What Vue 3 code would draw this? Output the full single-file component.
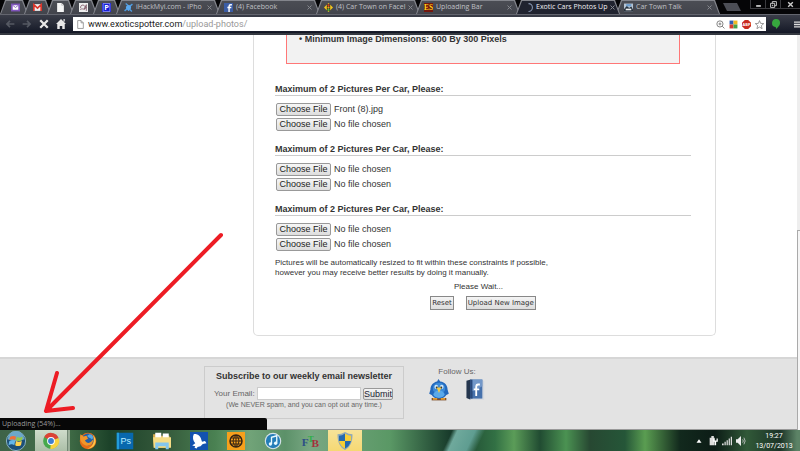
<template>
  <div class="desktop">
    <header class="browser">
      <nav class="tabs">
        <a v-for="tab in pinned" :key="tab" href="#" class="tab pinned" :aria-label="tab">
          <svg class="favicon" viewBox="0 0 16 16" v-html="icons[tab]"></svg>
        </a>
        <a v-for="tab in tabs" :key="tab.title" href="#" class="tab" :class="{ active: tab.active }">
          <svg class="favicon" viewBox="0 0 16 16" v-html="icons[tab.icon]"></svg>
          <span class="tab-title">{{ tab.title }}</span>
          <svg class="tab-close" viewBox="0 0 5 5"><path d="M.5.5l4 4M4.500.5l-4 4" stroke="#85878d" /></svg>
        </a>
        <button class="new-tab" aria-label="New tab"></button>
        <div class="window-controls">
          <button aria-label="Minimise"><svg viewBox="0 0 12 12"><path d="M2 7h8v3H2z" fill="#ccc" /></svg></button>
          <button aria-label="Restore"><svg viewBox="0 0 12 12"><path d="M4 4V1h7v7H8M1 4h7v7H1zM4 7h1v1H4z" fill="none" stroke="#ccc" stroke-width="1.6" /></svg></button>
          <button aria-label="Close"><svg viewBox="0 0 12 12"><path d="M2 2l8 8M10 2l-8 8" stroke="#ccc" stroke-width="2.4" /></svg></button>
        </div>
      </nav>

      <div class="toolbar">
        <button class="nav-button" aria-label="Back"><svg viewBox="0 0 16 16"><path d="M15 8H3M8 3L3 8l5 5" fill="none" stroke="#555963" stroke-width="2.6" /></svg></button>
        <button class="nav-button" aria-label="Forward"><svg viewBox="0 0 16 16"><path d="M1 8h12M8 3l5 5-5 5" fill="none" stroke="#555963" stroke-width="2.6" /></svg></button>
        <button class="nav-button" aria-label="Stop"><svg viewBox="0 0 16 16"><path d="M2 2l12 12M14 2L2 14" stroke="#e8e8e8" stroke-width="3.6" /></svg></button>
        <button class="nav-button" aria-label="Home"><svg viewBox="0 0 16 16"><path d="M8 0l8 8h-2v8h-4v-5H6v5H2V8H0zM12 0h2v4h-2z" fill="#e8e8e8" /></svg></button>
        <div class="address">
          <svg class="page-icon" viewBox="0 0 12 16"><path d="M1 1h6l4 4v10H1zM7 1v4h4" fill="#fff" stroke="#888" stroke-width="1.4" /></svg>
          <span class="url">www.exoticspotter.com<span class="path">/upload-photos/</span></span>
          <svg viewBox="0 0 16 16"><circle cx="7" cy="7" r="5.5" fill="none" stroke="#777" stroke-width="1.6" /><path d="M11 11l4 4M4.500 7h5M7 4.500v5" stroke="#777" stroke-width="1.6" /></svg>
          <svg viewBox="0 0 16 16"><path d="M1 1h7v7H1z" fill="#315eb4" /><path d="M8 1h7v7H8z" fill="#f2b822" /><path d="M1 8h7v7H1z" fill="#d43c30" /><path d="M8 8h7v7H8z" fill="#47a047" /></svg>
          <svg viewBox="0 0 16 16"><path d="M5 0h6l5 5v6l-5 5H5l-5-5V5z" fill="#c92a20" /><text x="8" y="10.500" font-size="7" font-weight="700" text-anchor="middle" fill="#fff">ABP</text></svg>
          <svg viewBox="0 0 16 16"><path d="M8 1l2 5 5.500.4-4.200 3.600 1.300 5.400L8 12.500l-4.600 2.900 1.300-5.400L.5 6.400 6 6z" fill="#fff" stroke="#777" stroke-width="1.3" /></svg>
        </div>
        <button class="extension" aria-label="Hangouts"><svg viewBox="0 0 16 16"><path d="M8 0a6.500 6.500 0 016.500 6.500C14.500 11 10 14 8 16c0-2 0-3-1-3.100A6.500 6.500 0 018 0z" fill="#37a83e" /></svg></button>
        <button class="menu" aria-label="Menu"><svg viewBox="0 0 10 12"><path d="M0 2h10M0 6h10M0 10h10" stroke="#ddd" stroke-width="2.200" /></svg></button>
      </div>
    </header>

    <main class="page">
      <div class="site">
        <form class="panel" @submit.prevent>
          <ul class="rules">
            <li>Minimum Image Dimensions: 600 By 300 Pixels</li>
          </ul>

          <fieldset v-for="car in 3" :key="car" class="car">
            <legend>Maximum of 2 Pictures Per Car, Please:</legend>
            <input
              v-for="slot in 2"
              :key="slot"
              ref="fileInputs"
              type="file"
              class="file"
              :aria-label="`Car ${car} picture ${slot}`"
            />
          </fieldset>

          <p class="note">
            Pictures will be automatically resized to fit within these constraints if possible,<br />
            however you may receive better results by doing it manually.
          </p>
          <p class="wait">Please Wait...</p>
          <div class="actions">
            <button type="button">Reset</button>
            <button type="submit">Upload New Image</button>
          </div>
        </form>
      </div>

      <footer class="footer">
        <form class="newsletter" @submit.prevent>
          <h2>Subscribe to our weekly email newsletter</h2>
          <div class="signup">
            <label for="email">Your Email:</label>
            <input id="email" v-model="email" type="email" />
            <button type="submit">Submit</button>
          </div>
          <p>(We NEVER spam, and you can opt out any time.)</p>
        </form>
        <div class="follow">
          <span>Follow Us:</span>
          <div class="social">
            <a href="#" aria-label="Twitter">
              <svg viewBox="0 0 32 36">
                <path d="M4 31h24v4H4z" fill="#7c4d2b" />
                <path d="M15 0l3 4c8 1 12 7 12 13l2 7-4 2c-2 4-7 6-12 6s-10-2-12-6l-4-2 2-7C2 10 7 5 13 4z" fill="#2369bd" />
                <path d="M16 6c7 0 10 5 10 10s-4 7-10 7-10-2-10-7 3-10 10-10z" fill="#3d8bd8" />
                <ellipse cx="16" cy="25" rx="9" ry="6" fill="#5aa9ea" />
                <ellipse cx="11.500" cy="13" rx="3" ry="3.500" fill="#cfe6f7" /><ellipse cx="20.500" cy="13" rx="3" ry="3.500" fill="#cfe6f7" />
                <circle cx="12.500" cy="14" r="1.800" fill="#123" /><circle cx="19.500" cy="14" r="1.800" fill="#123" />
                <path d="M12 14h8l-4 9z" fill="#f3c945" /><path d="M6 31h7v3H6zM19 31h7v3h-7z" fill="#e69b2e" />
              </svg>
            </a>
            <a href="#" aria-label="Facebook">
              <svg viewBox="0 0 32 36">
                <path d="M2 3l7-2v33l-7-3z" fill="#25364e" />
                <path d="M8 1h20l3 3v30H8z" fill="#d5d9df" /><path d="M8 1h20v31H8z" fill="#4671ac" />
                <path d="M8 1h4v31H8z" fill="#29497a" /><path d="M12 1h16v11L12 20z" fill="#7398c9" />
                <path d="M24 9h-3q-3 0-3 4v15M14 17h9" fill="none" stroke="#fff" stroke-width="3" />
              </svg>
            </a>
          </div>
        </div>
      </footer>
      <div class="scrollbar"><div class="thumb"></div></div>
      <div class="status">Uploading (54%)...</div>
    </main>

    <div class="taskbar">
      <button class="start" aria-label="Start"><svg viewBox="0 0 24 24" v-html="icons.windows"></svg></button>
      <button v-for="app in apps" :key="app" class="task" :class="app" :aria-label="app">
        <svg viewBox="0 0 24 24" v-html="icons[app]"></svg>
      </button>
      <div class="tray">
        <svg viewBox="0 0 12 12"><path d="M3 8l3-4 3 4z" fill="#fff" /></svg>
        <svg viewBox="0 0 12 12"><path d="M2 2h6v9H2zM4 0h3v2H4z" fill="#ddd" /><path d="M7 3v3h4V3M9 6v5" fill="none" stroke="#fff" stroke-width="1.500" /></svg>
        <svg viewBox="0 0 12 12"><path d="M0 9h2v2H0zM3 7h1.500v4H3zM5.500 5H7v6H5.500zM8 3h1.500v8H8zM10.500 1H12v10h-1.500z" fill="#ddd" /></svg>
        <svg viewBox="0 0 12 12"><path d="M0 4h2l4-4v12L2 8H0z" fill="#eee" /><path d="M8 4q1.500 2 0 4M9.500 2q3 4 0 8" fill="none" stroke="#ccc" /></svg>
      </div>
      <time class="clock">19:27<br />13/07/2013</time>
    </div>

    <svg class="arrow" viewBox="0 0 190 190" aria-hidden="true">
      <path d="M186 6L11 182M22 144L11 182L38 179" />
    </svg>
  </div>
</template>

<script setup>
import { ref, onMounted } from 'vue'

const email = ref('')
const fileInputs = ref([])

const pinned = ['mail', 'gmail', 'document', 'sketch', 'pandora']
const tabs = [
  { title: 'iHackMyi.com - iPho', icon: 'hack' },
  { title: '(4) Facebook', icon: 'facebook' },
  { title: '(4) Car Town on Facel', icon: 'cartown' },
  { title: 'Uploading Bar', icon: 'spotter' },
  { title: 'Exotic Cars Photos Up', icon: 'loading', active: true },
  { title: 'Car Town Talk', icon: 'talk' },
]
const apps = ['chrome', 'firefox', 'photoshop', 'explorer', 'bird', 'globe', 'itunes', 'ftb', 'shield']

const icons = {
  mail: '<path d="M0 1h16v14H0z" fill="#8055bb"/><path d="M3 4h10v8H3z" fill="#fff"/><path d="M3 4l5 4 5-4" fill="none" stroke="#8055bb" stroke-width="1.5"/>',
  gmail: '<path d="M0 2h16v12H0z" fill="#eee"/><path d="M1.500 14V3L8 9l6.500-6v11" fill="none" stroke="#d9362b" stroke-width="3"/>',
  document: '<path d="M2 0h8l4 4v12H2z" fill="#f5f5f5"/><path d="M10 0v4h4" fill="none" stroke="#aaa"/>',
  sketch: '<path d="M0 0h16v16H0z" fill="#eee"/><path d="M3 9a4 4 0 117 1M2 12c3-4 9 2 11-5M9 12l4-9v11" fill="none" stroke="#7b5262" stroke-width="1.4"/>',
  pandora: '<path d="M0 0h16v16H0z" fill="#1219d8"/><path d="M2 1h12v14H2z" fill="none" stroke="#fff" stroke-width=".8"/><text x="8" y="13" font-size="13" font-weight="700" text-anchor="middle" fill="#fff">P</text>',
  hack: '<path d="M8 5L3 1M10 6l5-4M6 10l-5 4M10 11l4 4M8 8v6" stroke="#4f9be0" stroke-width="2.500"/><circle cx="8" cy="8" r="4.500" fill="#5aa8ee"/>',
  facebook: '<path d="M0 0h16v16H0z" fill="#3b5da5"/><path d="M14 3h-2Q9 3 9 6v10M6 8h7" fill="none" stroke="#fff" stroke-width="2.500"/>',
  cartown: '<path d="M8 0l8 8-8 8-8-8z" fill="#f4c51f"/><path d="M5 2h6v12H5z" fill="#303b1d"/><circle cx="8" cy="4" r="2" fill="#df3528"/><circle cx="8" cy="8" r="2" fill="#f39b20"/><circle cx="8" cy="12" r="2" fill="#50b840"/>',
  spotter: '<path d="M0 0h16v16H0z" fill="#74170d"/><text x="8" y="13" font-size="13" font-weight="700" text-anchor="middle" fill="#ffd91c" font-family="Liberation Serif, serif">ES</text>',
  loading: '<path d="M8 1a7 7 0 010 14" fill="none" stroke="#8492ac" stroke-width="2"/>',
  talk: '<path d="M0 1h16v14H0z" fill="#b7c4d2"/><path d="M0 11l5-6 4 4 4-3 3 6v3H0z" fill="#26303c"/><path d="M4 2h9v4H4z" fill="#6d9ece"/><path d="M3 10h10v3H3z" fill="#eee"/>',
  windows: '<circle cx="12" cy="12" r="11.500" fill="#1c4f78" stroke="#9bc3d4"/><path d="M2 10a10 10 0 0120 0q-10 5-20 0z" fill="#6ca8c8"/><path d="M5 7q4-2 7 0l-1 4q-3-2-7 0z" fill="#ef7037"/><path d="M13 7q3 2 7 0l-1 4q-4 2-7 0z" fill="#94c84a"/><path d="M4 12q4-2 7 0l-1 5q-3-2-7 0z" fill="#64b7e9"/><path d="M12 12q3 2 7 0l-1 5q-4 2-7 0z" fill="#ffd34f"/>',
  chrome: '<circle cx="12" cy="12" r="10.500" fill="#46a84c"/><path d="M12 12L3 6.500A10.500 10.500 0 0122 8z" fill="#dc4335"/><path d="M12 12l10-4a10.500 10.500 0 01-11 14.500z" fill="#f9d340"/><circle cx="12" cy="12" r="5.200" fill="#fff"/><circle cx="12" cy="12" r="3.900" fill="#3e7ed0"/>',
  firefox: '<circle cx="12" cy="12" r="11" fill="#e76c17"/><circle cx="12" cy="10" r="8" fill="#255fa5"/><path d="M14 3c5 0 6 6 3 7-2-3-5-2-6-5z" fill="#56a7dd"/><path d="M2 3l4 3 4-1 2 4-4 2c2 5 7 4 9 1l2-2c0 7-6 9-10 8-6-2-9-9-7-15z" fill="#f19629"/><path d="M19 4c6 7 3 18-8 18 8-2 10-9 8-18z" fill="#ffc647"/>',
  photoshop: '<path d="M1 1h22v22H1z" fill="#0868ad"/><path d="M1 1h3v22H1z" fill="#239cda"/><text x="13" y="16" font-size="12" text-anchor="middle" fill="#b8edff">Ps</text>',
  explorer: '<path d="M0 3h8l2 2h12v16H1z" fill="#d9ad4f"/><path d="M3 1h8v7H3zM13 2h8v7h-8z" fill="#fff"/><path d="M0 7h24v14H1z" fill="#f5dc85"/><path d="M3 23V14h18v9h-4v-4H7v4z" fill="#83c6ee"/>',
  bird: '<path d="M0 0h24v24H0z" fill="#1352af"/><path d="M5 3c4-1 9 2 10 7l1 3 4-1 2 3-5 1-3 3-4 1-1 2-3-1 1-2-4-1 4-3c-3-3-4-8-2-12z" fill="#fff"/>',
  globe: '<path d="M0 0h24v24H0z" fill="#f6a01c"/><circle cx="12" cy="12" r="8" fill="none" stroke="#342213" stroke-width="2"/><path d="M12 4v16M4 12h16M6 8h12M6 16h12M12 4q-8 8 0 16M12 4q8 8 0 16" fill="none" stroke="#342213" stroke-width="1.300"/>',
  itunes: '<circle cx="12" cy="12" r="11" fill="#d7e4ea"/><circle cx="12" cy="12" r="9.500" fill="#237db8"/><path d="M10 16V7l7-2v10" fill="none" stroke="#e8faff" stroke-width="1.800"/><circle cx="8.500" cy="16" r="2.200" fill="#e8faff"/><circle cx="15.500" cy="15" r="2.200" fill="#e8faff"/>',
  ftb: '<g font-family="Liberation Serif, serif" font-weight="700"><text x="1" y="19" font-size="15" fill="#2d4f86">F</text><text x="9" y="13" font-size="12" fill="#2fae48">T</text><text x="14" y="20" font-size="15" fill="#a52f3c">B</text></g>',
  shield: '<path d="M12 0q5 3 10 3c0 11-3 17-10 21C5 20 2 14 2 3q5 0 10-3z" fill="#8fa9b8"/><path d="M12 2v10H4V5q4 0 8-3zM12 12h8q-2 7-8 10z" fill="#2469ae"/><path d="M12 2q4 3 8 3v7h-8zM12 12v10q-6-3-8-10z" fill="#f7ce36"/>',
}

onMounted(() => {
  // the first slot already holds the picture being uploaded
  const transfer = new DataTransfer()
  transfer.items.add(new File([''], 'Front (8).jpg', { type: 'image/jpeg' }))
  fileInputs.value[0].files = transfer.files
})
</script>

<style>
body {
  margin: 0;
}
</style>

<style scoped>
.desktop {
  position: relative;
  display: flex;
  flex-direction: column;
  height: 100vh;
  overflow: hidden;
  font: 9px/12px "Liberation Sans", Arial, sans-serif;
  color: #333;
  background: #fff;
}

button {
  padding: 0;
  border: 0;
  background: none;
  font: inherit;
  color: inherit;
}

p,
h2,
ul {
  margin: 0;
  padding: 0;
}

svg {
  display: block;
  flex: none;
}

.browser {
  flex: none;
  font-family: "Open Sans", sans-serif;
}

.tabs {
  display: flex;
  height: 14px;
  background: #050507;
}

.tab {
  position: relative;
  isolation: isolate;
  display: flex;
  flex: 0 1 104px;
  align-items: center;
  gap: 3px;
  min-width: 0;
  box-sizing: border-box;
  margin-right: -4px;
  padding: 0 8px;
  font-size: 7px;
  color: #c0c1c6;
  text-decoration: none;
}

.tab::before,
.tab::after {
  content: "";
  position: absolute;
  z-index: -2;
  inset: 0;
  background: #83858c;
  clip-path: polygon(0 100%, 5px 0, calc(100% - 5px) 0, 100% 100%);
}

.tab::after {
  z-index: -1;
  inset: 1px 1px 0;
  background: linear-gradient(#4b4d54, #42444c);
}

.tab.active {
  z-index: 1;
  color: #f0f0f4;
}

.tab.active::after {
  background: #20232f;
}

.pinned {
  flex: 0 0 27px;
  padding: 0 9px;
}

.pinned:first-child {
  flex-basis: 28px;
  padding-left: 11px;
}

.favicon {
  width: 9px;
  height: 9px;
}

.tab-title {
  flex: 1;
  white-space: nowrap;
}

.tab-close {
  width: 5px;
  height: 5px;
}

.new-tab {
  width: 18px;
  height: 8px;
  margin: 3px 0 0 7px;
  background: #4c4e56;
  clip-path: polygon(0 0, 14px 0, 100% 100%, 4px 100%);
}

.window-controls {
  display: flex;
  margin-left: auto;
}

.window-controls button {
  display: grid;
  place-items: center;
  width: 15px;
  height: 9px;
  border: solid #3c3c40;
  border-width: 0 0 1px 1px;
}

.window-controls button:last-child {
  width: 20px;
}

.window-controls svg {
  width: 7px;
  height: 7px;
}

.toolbar {
  display: flex;
  align-items: center;
  height: 21px;
  box-sizing: border-box;
  padding-left: 5px;
  border-top: 1px solid #63656e;
  border-bottom: 2px solid #343840;
  background: linear-gradient(#3a3d48, #141826);
}

.nav-button {
  width: 17px;
}

.nav-button svg {
  width: 10px;
  height: 10px;
}

.address {
  display: flex;
  flex: 1;
  align-items: center;
  gap: 4px;
  height: 14px;
  box-sizing: border-box;
  padding: 0 2px 0 4px;
  background: #fff;
}

.address svg {
  width: 9px;
  height: 9px;
}

.address .page-icon {
  width: 7px;
}

.url {
  flex: 1;
  font-family: Roboto, sans-serif;
  font-size: 9px;
  color: #222;
}

.path {
  color: #999;
}

.extension svg {
  width: 10px;
  height: 10px;
}

.extension {
  margin: 0 13px 0 5px;
}

.menu svg {
  width: 6px;
  height: 9px;
}

.page {
  position: relative;
  display: flex;
  flex: 1;
  flex-direction: column;
  min-height: 0;
  overflow: hidden;
}

.site {
  flex: 1;
  padding: 0 84px 21px 253px;
}

.panel {
  box-sizing: border-box;
  height: 100%;
  padding: 0 24px 0 21px;
  border: 1px solid #ddd;
  border-top: 0;
  border-radius: 0 0 5px 5px;
}

.rules {
  height: 28px;
  margin: 0 11px 19px;
  padding-left: 12px;
  border: 1px solid #f77;
  border-top: 0;
  background: #f2f2f2;
  font-weight: 700;
  line-height: 9px;
  list-style: none;
}

.rules li::before {
  content: "• ";
}

.car {
  display: flex;
  flex-direction: column;
  gap: 2px;
  height: 60px;
  min-width: 0;
  box-sizing: border-box;
  margin: 0;
  padding: 0;
  border: 0;
}

.car legend {
  width: 100%;
  box-sizing: border-box;
  margin-bottom: 7px;
  padding: 0;
  border-bottom: 1px solid #ccc;
  font-weight: 700;
}

.file {
  width: 162px;
  height: 13px;
  margin-left: 1px;
  font: 9px/13px "Liberation Sans", Arial, sans-serif;
}

.file::file-selector-button {
  width: 55px;
  height: 13px;
  margin: 0 3px 0 0;
  padding: 0;
  border: 1px solid #999;
  border-radius: 2px;
  background: linear-gradient(#f6f6f6, #ddd);
  font: 9px/11px "Liberation Sans", Arial, sans-serif;
  color: #222;
}

.note {
  margin-top: -5px;
  font-size: 8px;
  line-height: 10px;
}

.wait {
  margin: 3px 0;
  padding-right: 9px;
  font-size: 8px;
  text-align: center;
}

.actions {
  display: flex;
  justify-content: center;
  gap: 12px;
}

.actions button {
  height: 14px;
  padding: 0 1px;
  border: 1px solid #888;
  background: linear-gradient(#f4f4f4, #ddd);
  font: 7px/12px "DejaVu Sans", Verdana, sans-serif;
}

.footer {
  display: flex;
  flex: none;
  align-items: flex-start;
  gap: 25px;
  height: 73px;
  box-sizing: border-box;
  padding: 7px 0 0 204px;
  border-top: 2px solid #d6d6d6;
  border-bottom: 1px solid #999;
  background: #e3e3e3;
}

.newsletter {
  width: 200px;
  height: 53px;
  box-sizing: border-box;
  padding-top: 3px;
  border: 1px solid #ccc;
  text-align: center;
}

.newsletter h2 {
  font-size: 9px;
  line-height: 12px;
}

.signup {
  display: flex;
  align-items: center;
  gap: 2px;
  margin-top: 5px;
  padding: 0 10px 0 9px;
}

.signup label {
  font-size: 8px;
  color: #666;
}

.signup input {
  flex: 1;
  min-width: 0;
  height: 13px;
  box-sizing: border-box;
  padding: 0 2px;
  border: 1px solid #ccc;
  background: #fff;
  font: inherit;
}

.signup button {
  height: 12px;
  border: 1px solid #999;
  border-radius: 2px;
  background: linear-gradient(#f4f4f4, #ddd);
  line-height: 10px;
  color: #223;
}

.newsletter p {
  font-size: 7px;
  line-height: 9px;
  color: #666;
}

.follow {
  width: 56px;
  padding-top: 1px;
  font-size: 8px;
  line-height: 9px;
  text-align: center;
  color: #666;
}

.social {
  display: flex;
  justify-content: space-between;
  margin-top: 3px;
}

.social svg {
  width: 20px;
  height: 22px;
}

.scrollbar {
  position: absolute;
  inset: 0 0 0 auto;
  width: 3px;
  padding-top: 195px;
  background: #eee;
}

.thumb {
  height: 100%;
  border: 1px solid #aaa;
  border-right: 0;
  background: #f5f5f5;
}

.status {
  position: absolute;
  bottom: 0;
  left: 0;
  width: 267px;
  box-sizing: border-box;
  padding-left: 2px;
  border-radius: 0 2px 0 0;
  background: #070707;
  font: 7px/12px "Open Sans", sans-serif;
  color: #999;
}

.taskbar {
  display: flex;
  flex: none;
  align-items: center;
  height: 21px;
  background:
    linear-gradient(115deg, transparent 410px, #6fa99c 415px, #5f9d91 431px, transparent 440px),
    linear-gradient(90deg, #3e6348, #426e48 65px, #1c4229 110px, #35593b 165px, #4a8152 215px, #71a378 250px, #5c9169 285px, #78a782 310px, #5a9865 390px, #183b2b 450px, #327044 495px, #5b9c58 514px, #214c32 540px, #4b9252 566px, #274832 590px, #255638 625px, #5a9d51 645px, #12291d 680px, #0c1c16 715px, #315938 747px, #1b3327 780px, #5c8366 797px);
}

.taskbar svg {
  width: 18px;
  height: 18px;
}

.start {
  display: grid;
  place-items: center;
  width: 31px;
  margin-right: 4px;
}

.start svg {
  width: 20px;
  height: 20px;
}

.task {
  display: grid;
  place-items: center;
  width: 32px;
  height: 21px;
  margin-right: 5px;
}

.task.chrome {
  background: linear-gradient(#cfdccb, #acbfa8);
  box-shadow: 1px 0 #738875, 3px 0 #9aae98;
}

.task.shield {
  width: 34px;
  margin-left: -3px;
  background: linear-gradient(#f6e399, #f6d873);
}

.tray {
  display: flex;
  gap: 4px;
  margin: 0 3px 0 auto;
}

.tray svg {
  width: 10px;
  height: 10px;
}

.clock {
  width: 50px;
  padding-right: 1px;
  font: 7px/10px Roboto, sans-serif;
  text-align: center;
  color: #fff;
}

.arrow {
  position: absolute;
  top: 229px;
  left: 35px;
  width: 190px;
  height: 190px;
  fill: none;
  stroke: #ed1c24;
  stroke-width: 4;
  stroke-linecap: round;
  stroke-linejoin: round;
  pointer-events: none;
}
</style>
